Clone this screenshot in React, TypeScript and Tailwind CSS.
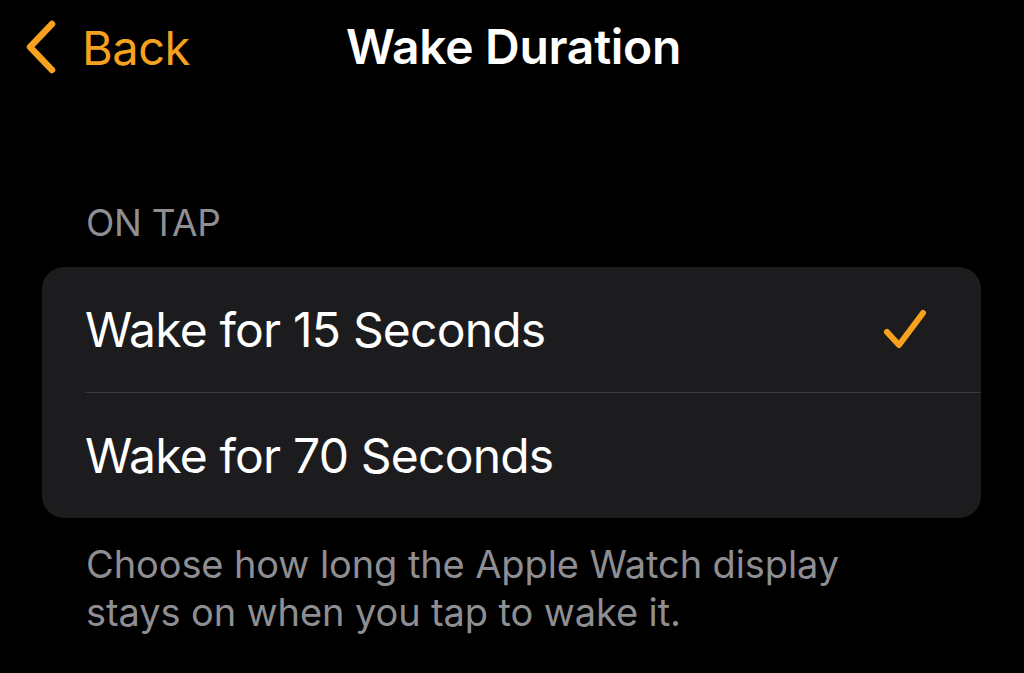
const font = { fontFamily: 'Inter, "Liberation Sans", sans-serif' }

export default function App() {
  return (
    <div className="w-[1024px] h-[673px] bg-black overflow-hidden" style={font}>
      <div className="relative flex items-center h-[94px]">
        <div className="flex items-center pl-[24px] text-[#f7a21e]">
          <svg width="34" height="54" viewBox="0 0 34 54">
            <path d="M28 4 L6 27 L28 50" fill="none" stroke="currentColor" strokeWidth="6.5" strokeLinecap="round" strokeLinejoin="round" />
          </svg>
          <span className="ml-[24px] text-[47px] leading-none tracking-[-0.5px]">Back</span>
        </div>
        <div className="absolute left-[346px] top-0 h-full flex items-center text-white text-[48px] font-semibold leading-none tracking-[-0.3px]">
          Wake Duration
        </div>
      </div>

      <div className="pl-[86px] mt-[110px] text-[#8e8e93] text-[37px] leading-none tracking-[-0.3px]">ON TAP</div>

      <div className="mx-[42px] mt-[26px] w-[939px] rounded-[22px] bg-[#1c1c1e]">
        <div className="flex items-center justify-between h-[125px] pl-[43px] pr-[52px]">
          <span className="text-white text-[48px] tracking-[-0.8px] leading-none">Wake for 15 Seconds</span>
          <svg width="48" height="48" viewBox="0 0 48 48">
            <path d="M6 26 L18 39 L42 7" fill="none" stroke="#f7a21e" strokeWidth="6" strokeLinecap="round" strokeLinejoin="round" />
          </svg>
        </div>
        <div className="ml-[43px] h-px bg-[#38383a]" />
        <div className="flex items-center h-[125px] pl-[43px]">
          <span className="text-white text-[48px] tracking-[-0.8px] leading-none">Wake for 70 Seconds</span>
        </div>
      </div>

      <div className="pl-[86px] mt-[22px] text-[#8e8e93] text-[38px] leading-[48px] tracking-[-0.1px]">
        Choose how long the Apple Watch display
        <br />
        stays on when you tap to wake it.
      </div>
    </div>
  )
}
